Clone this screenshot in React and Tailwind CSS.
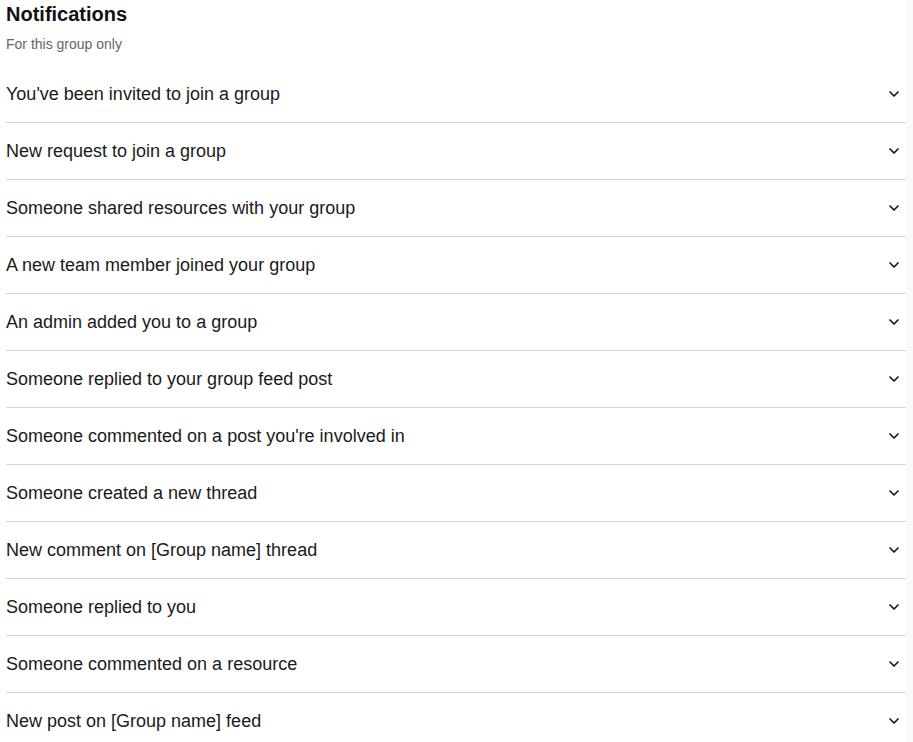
import React from 'react';
import { ChevronDown } from 'lucide-react';

const items = [
  "You've been invited to join a group",
  'New request to join a group',
  'Someone shared resources with your group',
  'A new team member joined your group',
  'An admin added you to a group',
  'Someone replied to your group feed post',
  "Someone commented on a post you're involved in",
  'Someone created a new thread',
  'New comment on [Group name] thread',
  'Someone replied to you',
  'Someone commented on a resource',
  'New post on [Group name] feed',
];

const App = () => {
  return (
    <div className="flex min-h-screen bg-white font-['Liberation_Sans',Arial,sans-serif] text-[#1a1a1a]">
      <div className="w-[906px] pl-[6px]">
        <h2 className="text-[20px] leading-[28px] font-bold text-[#111]">Notifications</h2>
        <p className="mt-[6px] text-[14px] leading-[20px] text-[#666]">For this group only</p>
        <div className="mt-[12px]">
          {items.map((label, i) => (
            <button
              key={i}
              className="flex w-full h-[57px] items-center justify-between border-b border-[#d4d4d4] text-left"
            >
              <span className="text-[18px] leading-[24px]">{label}</span>
              <ChevronDown size={16} strokeWidth={2.6} className="mr-1 text-[#1a1a1a]" />
            </button>
          ))}
        </div>
      </div>
      <div className="flex-1 bg-[#fafafa]" />
    </div>
  );
};

export default App;
